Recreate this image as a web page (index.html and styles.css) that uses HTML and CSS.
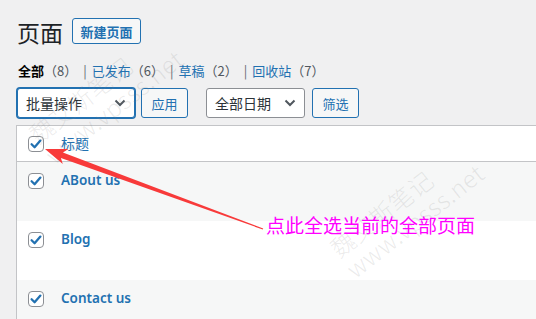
FILE: index.html
```html
<!DOCTYPE html>
<html lang="zh-CN">
<head>
<meta charset="utf-8">
<title>页面</title>
<link rel="stylesheet" href="styles.css">
</head>
<body>
<div class="wrap">
  <div class="page-head">
    <h1 class="page-title">页面</h1>
    <a class="btn btn-new" href="#">新建页面</a>
  </div>
  <ul class="subsubsub">
    <li><span class="current">全部</span><span class="count">（8）</span><span class="sep">|</span></li>
    <li><a href="#">已发布</a><span class="count">（6）</span><span class="sep">|</span></li>
    <li><a href="#">草稿</a><span class="count">（2）</span><span class="sep">|</span></li>
    <li><a href="#">回收站</a><span class="count">（7）</span></li>
  </ul>
  <div class="tablenav">
    <div class="select select-focus select-bulk"><span>批量操作</span><svg class="chev" width="12" height="8" viewBox="0 0 12 8"><path d="M1.5 1.5 L6 6 L10.5 1.5" fill="none" stroke="#50575e" stroke-width="2"/></svg></div>
    <button class="btn btn-small">应用</button>
    <div class="select select-date"><span>全部日期</span><svg class="chev" width="12" height="8" viewBox="0 0 12 8"><path d="M1.5 1.5 L6 6 L10.5 1.5" fill="none" stroke="#50575e" stroke-width="2"/></svg></div>
    <button class="btn btn-small">筛选</button>
  </div>
  <div class="list">
    <div class="row row-head">
      <div class="cb"><svg width="16" height="16" viewBox="0 0 16 16"><rect x="0.5" y="0.5" width="15" height="15" rx="3.5" fill="#fff" stroke="#8c8f94"/><path d="M3.6 8.2 L6.6 11.2 L12.4 4.6" fill="none" stroke="#2271b1" stroke-width="2.3" stroke-linecap="round" stroke-linejoin="round"/></svg></div>
      <div class="col-title head-title">标题</div>
    </div>
    <div class="row row-alt">
      <div class="cb"><svg width="16" height="16" viewBox="0 0 16 16"><rect x="0.5" y="0.5" width="15" height="15" rx="3.5" fill="#fff" stroke="#8c8f94"/><path d="M3.6 8.2 L6.6 11.2 L12.4 4.6" fill="none" stroke="#2271b1" stroke-width="2.3" stroke-linecap="round" stroke-linejoin="round"/></svg></div>
      <div class="col-title"><a class="row-title" href="#">ABout us</a></div>
    </div>
    <div class="row">
      <div class="cb"><svg width="16" height="16" viewBox="0 0 16 16"><rect x="0.5" y="0.5" width="15" height="15" rx="3.5" fill="#fff" stroke="#8c8f94"/><path d="M3.6 8.2 L6.6 11.2 L12.4 4.6" fill="none" stroke="#2271b1" stroke-width="2.3" stroke-linecap="round" stroke-linejoin="round"/></svg></div>
      <div class="col-title"><a class="row-title" href="#">Blog</a></div>
    </div>
    <div class="row row-alt">
      <div class="cb"><svg width="16" height="16" viewBox="0 0 16 16"><rect x="0.5" y="0.5" width="15" height="15" rx="3.5" fill="#fff" stroke="#8c8f94"/><path d="M3.6 8.2 L6.6 11.2 L12.4 4.6" fill="none" stroke="#2271b1" stroke-width="2.3" stroke-linecap="round" stroke-linejoin="round"/></svg></div>
      <div class="col-title"><a class="row-title" href="#">Contact us</a></div>
    </div>
  </div>

  <div class="watermark wm1">魏艾斯笔记<br>www.vpsss.net</div>
  <div class="watermark wm2">魏艾斯笔记<br>www.vpsss.net</div>

  <svg class="arrow" width="536" height="319" viewBox="0 0 536 319">
    <polygon points="45,149 68.4,149.1 62.9,152.4 263.2,228.5 262.8,229.5 60.9,158 62.8,164.1" fill="#f83a3a"/>
  </svg>
  <div class="note">点此全选当前的全部页面</div>
</div>
</body>
</html>
```
FILE: styles.css
```css
html, body {
  margin: 0;
  padding: 0;
}
body {
  background: #f0f0f1;
  font-family: "Noto Sans CJK SC", "Noto Sans", sans-serif;
  color: #3c434a;
  width: 536px;
  height: 319px;
  overflow: hidden;
}
.wrap {
  position: relative;
  width: 536px;
  height: 319px;
  overflow: hidden;
  padding-left: 16px;
  box-sizing: border-box;
}
a { text-decoration: none; color: #2271b1; }

.page-head {
  display: flex;
  align-items: center;
  gap: 9px;
  padding-top: 18px;
  padding-left: 1px;
  height: 26px;
}
.page-title {
  margin: 0;
  font-size: 23px;
  font-weight: 400;
  line-height: 26px;
  color: #1d2327;
  position: relative;
  top: 1px;
}
.btn {
  box-sizing: border-box;
  display: inline-flex;
  align-items: center;
  justify-content: center;
  border: 1px solid #2271b1;
  border-radius: 3px;
  background: #f6f7f7;
  color: #2271b1;
  font-family: inherit;
  font-size: 13px;
  padding: 0 8px;
}
.btn-new {
  height: 26px;
  width: 69px;
  font-weight: 600;
  padding: 0;
}

.subsubsub {
  list-style: none;
  margin: 0;
  padding: 0;
  display: flex;
  font-size: 13px;
  line-height: 20px;
  margin-top: 17px;
  padding-left: 2px;
  color: #646970;
  white-space: nowrap;
}
.subsubsub .current { color: #000; font-weight: 600; }
.subsubsub .count { color: #50575e; }
.subsubsub .sep { color: #646970; padding: 0 5px 0 6px; }

.tablenav {
  display: flex;
  align-items: center;
  margin-top: 7px;
  height: 30px;
  padding-left: 1px;
}
.select {
  box-sizing: border-box;
  height: 30px;
  border: 1px solid #8c8f94;
  border-radius: 3px;
  background: #fff;
  display: flex;
  align-items: center;
  justify-content: space-between;
  padding: 0 8px 0 8px;
  font-size: 14px;
  color: #2c3338;
}
.select-focus {
  border-color: #2271b1;
  box-shadow: 0 0 0 1px #2271b1;
}
.select-bulk { width: 118px; }
.select-date { width: 99px; margin-left: 18px; }
.btn-small { height: 30px; width: 47px; margin-left: 6px; }
.select-date + .btn-small { margin-left: 7px; }

.list {
  margin-top: 7px;
  border: 1px solid #c3c4c7;
  border-right: none;
  background: #fff;
  width: 600px;
}
.row {
  display: flex;
  height: 59px;
  box-sizing: border-box;
}
.row-alt { background: #f6f7f7; }
.row-head {
  height: 36px;
  border-bottom: 1px solid #c3c4c7;
}
.cb {
  width: 44px;
  box-sizing: border-box;
  padding: 11px 0 0 11px;
  line-height: 0;
}
.row-head .cb { padding-top: 10px; }
.col-title {
  padding-top: 7px;
  font-size: 14px;
  line-height: 21px;
}
.head-title {
  color: #2271b1;
  padding-top: 7px;
}
.row-title {
  font-family: "Noto Sans", "Open Sans", sans-serif;
  font-weight: 600;
  font-size: 13.5px;
  color: #2271b1;
}

.watermark {
  position: absolute;
  font-size: 24px;
  line-height: 26px;
  color: rgba(130, 130, 130, 0.16);
  white-space: nowrap;
  transform-origin: 0 0;
  transform: rotate(-38deg);
  font-weight: 300;
  letter-spacing: 0.5px;
  pointer-events: none;
}
.wm1 { left: 24px; top: 127px; }
.wm2 { left: 325px; top: 241px; }

.arrow {
  position: absolute;
  left: 0;
  top: 0;
  pointer-events: none;
}
.note {
  position: absolute;
  left: 266px;
  top: 214px;
  font-size: 19px;
  line-height: 22px;
  color: #f0f;
  white-space: nowrap;
}
```
